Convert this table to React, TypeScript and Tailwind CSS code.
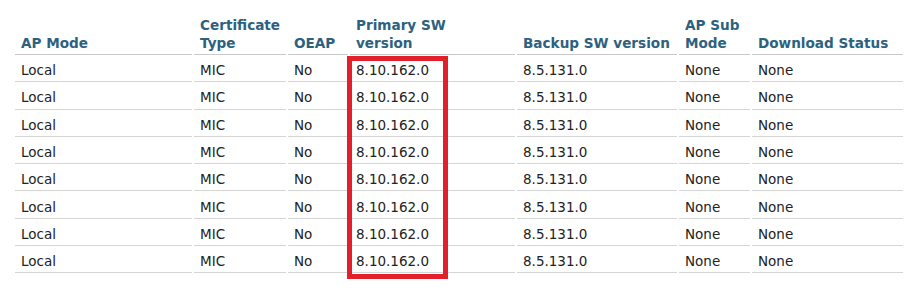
import React from 'react';

const columns = [
  { label: ['AP Mode'], width: 'w-[177px]' },
  { label: ['Certificate', 'Type'], width: 'w-[92px]' },
  { label: ['OEAP'], width: 'w-[60px]' },
  { label: ['Primary SW', 'version'], width: 'w-[165px]' },
  { label: ['Backup SW version'], width: 'w-[160px]' },
  { label: ['AP Sub', 'Mode'], width: 'w-[71px]' },
  { label: ['Download Status'], width: 'w-[151px]' },
];

const row = ['Local', 'MIC', 'No', '8.10.162.0', '8.5.131.0', 'None', 'None'];
const rows = Array.from({ length: 8 }, () => row);

const App: React.FC = () => {
  return (
    <div className="relative w-[907px] h-[292px] bg-white overflow-hidden font-['DejaVu_Sans',sans-serif]">
      <table className="table-fixed border-separate border-spacing-x-[2px] border-spacing-y-0 ml-[13px] mt-[1px] w-[892px]">
        <colgroup>
          {columns.map((c, i) => (
            <col key={i} className={c.width} />
          ))}
        </colgroup>
        <thead>
          <tr>
            {columns.map((c, i) => (
              <th
                key={i}
                className="align-bottom text-left font-bold text-[13.6px] leading-[18px] text-[#2d6180] pl-[6px] pt-[15px] pb-[2px] border-b border-[#c8c8c8] whitespace-nowrap"
              >
                {c.label.map((l, j) => (
                  <div key={j}>{l}</div>
                ))}
              </th>
            ))}
          </tr>
        </thead>
        <tbody>
          {rows.map((r, i) => (
            <tr key={i}>
              {r.map((cell, j) => (
                <td
                  key={j}
                  className="h-[27.3px] pl-[6px] pt-[4px] text-[13.5px] leading-[16px] text-[#222] border-b border-[#d4d4d4] align-middle whitespace-nowrap"
                >
                  {cell}
                </td>
              ))}
            </tr>
          ))}
        </tbody>
      </table>
      {/* annotation box round the primary version column */}
      <div className="absolute left-[347px] top-[56px] w-[101px] h-[223px] border-[5px] border-[#e2202a]" />
    </div>
  );
};

export default App;
